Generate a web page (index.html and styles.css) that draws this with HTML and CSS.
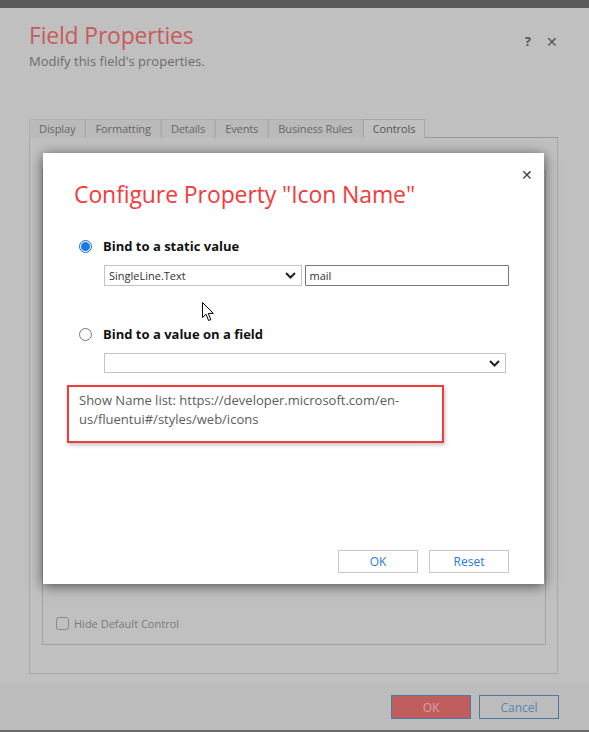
FILE: index.html
```html
<!DOCTYPE html>
<html>
<head>
<meta charset="utf-8">
<link rel="stylesheet" href="styles.css">
</head>
<body>
<div class="topbar"></div>
<div class="dialog">
  <div class="dlg-head">
    <div class="titles">
      <div class="dlg-title">Field Properties</div>
      <div class="dlg-sub">Modify this field's properties.</div>
    </div>
    <div class="head-icons"><span class="help">?</span><span class="x">✕</span></div>
  </div>
  <div class="tabs">
    <div class="tab">Display</div>
    <div class="tab">Formatting</div>
    <div class="tab">Details</div>
    <div class="tab">Events</div>
    <div class="tab">Business Rules</div>
    <div class="tab active">Controls</div>
    <div class="tab-fill"></div>
  </div>
  <div class="pane">
    <div class="inner-box">
      <label class="hide-ctl"><span class="cb"></span>Hide Default Control</label>
    </div>
  </div>
</div>
<div class="footer">
  <button class="fbtn ok">OK</button>
  <button class="fbtn cancel">Cancel</button>
</div>
<div class="bottombar"></div>

<div class="modal">
  <div class="m-close-row"><span class="m-close">✕</span></div>
  <h1 class="m-title">Configure Property "Icon Name"</h1>
  <div class="opt">
    <span class="radio checked"></span><span class="opt-label">Bind to a static value</span>
  </div>
  <div class="controls-row">
    <div class="select s1"><span>SingleLine.Text</span><svg class="chev" width="11" height="7" viewBox="0 0 11 7"><path d="M1 1l4.5 4.5L10 1" fill="none" stroke="#222" stroke-width="2"/></svg></div>
    <div class="input">mail</div>
  </div>
  <div class="opt opt2">
    <span class="radio"></span><span class="opt-label">Bind to a value on a field</span>
  </div>
  <div class="controls-row">
    <div class="select s2"><span></span><svg class="chev" width="11" height="7" viewBox="0 0 11 7"><path d="M1 1l4.5 4.5L10 1" fill="none" stroke="#222" stroke-width="2"/></svg></div>
  </div>
  <div class="note">Show Name list: https://developer.microsoft.com/en-us/fluentui#/styles/web/icons</div>
  <div class="m-buttons">
    <button class="mbtn">OK</button>
    <button class="mbtn">Reset</button>
  </div>
</div>

<svg class="cursor" width="13" height="20" viewBox="0 0 13 20"><path d="M0.5 0.5 L0.5 15.5 L4 12.2 L6.6 18.5 L8.8 17.6 L6.3 11.4 L11.3 11.4 Z" fill="#fff" stroke="#000" stroke-width="1"/></svg>
</body>
</html>
```
FILE: styles.css
```css
* { box-sizing: border-box; }
html, body { margin: 0; padding: 0; }
body {
  width: 589px;
  height: 732px;
  background: #c0c0c0;
  font-family: "Open Sans", "Noto Sans", sans-serif;
  position: relative;
  overflow: hidden;
}
.topbar { height: 8px; background: #5a5a5a; }
.dialog { padding: 0 31px 0 29px; height: 676px; }
.dlg-head { display: flex; justify-content: space-between; padding-top: 11px; height: 111px; }
.dlg-title { font-size: 23px; line-height: 32px; color: #c85b5b; letter-spacing: -0.2px; }
.dlg-sub { font-size: 13px; line-height: 18px; color: #6c6c6c; margin-top: 1px; }
.head-icons { display: flex; gap: 15px; padding-top: 13px; color: #555; font-size: 13px; font-weight: 700; }
.head-icons .x { font-weight: 400; font-size: 14px; }
.tabs { display: flex; height: 19px; }
.tab {
  font-size: 11px; line-height: 17px; color: #666;
  background: #bababa; border: 1px solid #b0b0b0; border-bottom: none;
  padding: 0 9px; letter-spacing: -0.1px;
}
.tab + .tab { border-left: 1px solid #aaaaaa; }
.tab.active { background: #c0c0c0; color: #555; border-color: #a8a8a8; }
.tab-fill { flex: 1; border-bottom: 1px solid #9a9a9a; }
.pane {
  border: 1px solid #a8a8a8; border-top: none; height: 536px;
  padding: 32px 11px 28px 12px;
}
.inner-box {
  border: 1px solid #a2a2a2; height: 475px;
  display: flex; flex-direction: column; justify-content: flex-end;
  padding: 0 0 13px 13px;
}
.hide-ctl { display: flex; align-items: center; gap: 5px; font-size: 11px; color: #7a7a7a; }
.cb { width: 13px; height: 13px; border: 1px solid #8a8a8a; border-radius: 3px; }
.footer {
  height: 46px; background: #bcbcbc;
  display: flex; justify-content: flex-end; align-items: flex-start;
  padding: 11px 30px 0 0; gap: 8px;
}
.fbtn {
  width: 80px; height: 24px; font-family: inherit; font-size: 12px;
  border: 1px solid #4a79a6; background: transparent; color: #5b86b0;
}
.fbtn.ok { background: #c05e5e; color: #d9a2a2; }
.bottombar { height: 2px; background: #6a6a6a; }

.modal {
  position: absolute; left: 43px; top: 153px; width: 501px; height: 431px;
  background: #fff; box-shadow: 0 2px 12px rgba(0,0,0,0.6);
  padding: 0 35px 11px 24px;
  display: flex; flex-direction: column;
}
.m-close-row { display: flex; justify-content: flex-end; height: 24px; padding-top: 15px; margin-right: -24px; }
.m-close { font-size: 14px; color: #444; line-height: 14px; }
.m-title {
  margin: 1px 0 0 7px; font-weight: 400; font-size: 23px; line-height: 32px;
  color: #f23b3b; letter-spacing: -0.1px;
}
.opt { display: flex; align-items: center; gap: 11px; margin: 26px 0 0 12px; height: 20px; }
.opt2 { margin-top: 38px; }
.radio {
  width: 13px; height: 13px; border-radius: 50%; border: 1px solid #777; background: #fff;
}
.radio.checked { border-color: #0a6fd8; box-shadow: inset 0 0 0 1px #fff; background: radial-gradient(circle, #1779ec 0 4.6px, #fff 5px); }
.opt-label { font-size: 13px; font-weight: 700; color: #111; }
.controls-row { display: flex; gap: 3px; margin: 9px 0 0 37px; }
.select {
  height: 21px; border: 1px solid #c4c4c4; display: flex; align-items: center; justify-content: space-between;
  padding: 0 5px 0 4px; font-size: 11px; color: #333;
}
.s1 { width: 198px; }
.s2 { width: 402px; height: 20px; margin-top: 0; }
.input { width: 205px; height: 21px; border: 1px solid #767676; font-size: 11px; color: #333; padding: 2px 4px; border-radius: 1px; }
.note {
  margin: 12px 0 0 0; width: 377px; height: 58px; border: 2px solid #f23b3b;
  box-shadow: 1px 2px 4px rgba(0,0,0,0.25);
  padding: 4px 10px; font-size: 13px; line-height: 19px; color: #5c5c5c;
}
.m-buttons { margin-top: auto; display: flex; justify-content: flex-end; gap: 11px; }
.mbtn {
  width: 80px; height: 23px; background: #fff; border: 1px solid #c8c8c8;
  font-family: inherit; font-size: 12px; color: #2a7bd6;
}
.cursor { position: absolute; left: 202px; top: 302px; }
```
